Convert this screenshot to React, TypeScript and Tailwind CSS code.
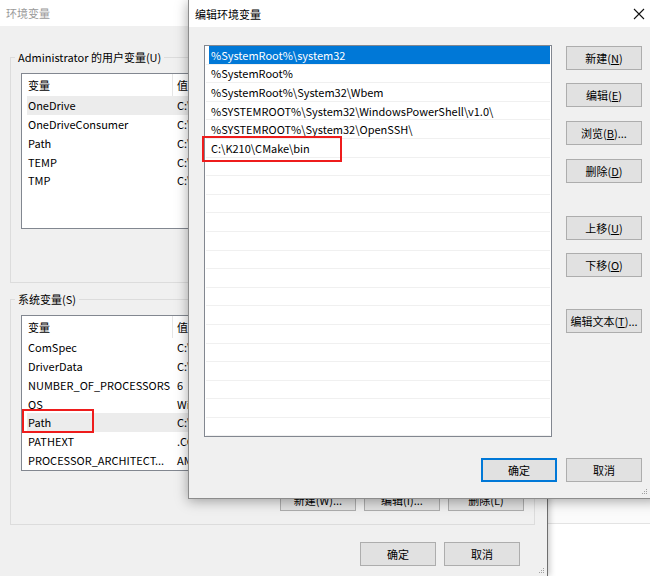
import React from "react";

const userVars: [string, string][] = [
  ["OneDrive", "C:\\Users\\Administrator\\OneDrive"],
  ["OneDriveConsumer", "C:\\Users\\Administrator\\OneDrive"],
  ["Path", "C:\\Users\\Administrator\\AppData\\Local\\Microsoft\\WindowsApps;"],
  ["TEMP", "C:\\Users\\Administrator\\AppData\\Local\\Temp"],
  ["TMP", "C:\\Users\\Administrator\\AppData\\Local\\Temp"],
];

const sysVars: [string, string][] = [
  ["ComSpec", "C:\\Windows\\system32\\cmd.exe"],
  ["DriverData", "C:\\Windows\\System32\\Drivers\\DriverData"],
  ["NUMBER_OF_PROCESSORS", "6"],
  ["OS", "Windows_NT"],
  ["Path", "C:\\Windows\\system32;C:\\Windows;"],
  ["PATHEXT", ".COM;.EXE;.BAT;.CMD;.VBS"],
  ["PROCESSOR_ARCHITECT...", "AMD64"],
];

const pathEntries = [
  "%SystemRoot%\\system32",
  "%SystemRoot%",
  "%SystemRoot%\\System32\\Wbem",
  "%SYSTEMROOT%\\System32\\WindowsPowerShell\\v1.0\\",
  "%SYSTEMROOT%\\System32\\OpenSSH\\",
  "C:\\K210\\CMake\\bin",
];

function WinButton({ children, primary = false, h = "h-[24px]" }: { children: React.ReactNode; primary?: boolean; h?: string }) {
  return (
    <button
      className={`${h} w-[76px] shrink-0 flex items-center justify-center bg-[#e1e1e1] text-[11px] text-black ${
        primary ? "border-2 border-[#0078d7]" : "border border-[#adadad]"
      }`}
    >
      {children}
    </button>
  );
}

function Grip() {
  return (
    <svg width="6" height="6" viewBox="0 0 6 6" className="block">
      <rect x="4" y="0" width="1" height="1" fill="#a0a0a0" />
      <rect x="2" y="2" width="1" height="1" fill="#a0a0a0" />
      <rect x="4" y="2" width="1" height="1" fill="#a0a0a0" />
      <rect x="0" y="4" width="1" height="1" fill="#a0a0a0" />
      <rect x="2" y="4" width="1" height="1" fill="#a0a0a0" />
      <rect x="4" y="4" width="1" height="1" fill="#a0a0a0" />
    </svg>
  );
}

function VarList({ rows, active, mark = false }: { rows: [string, string][]; active: number; mark?: boolean }) {
  return (
    <div className="relative ml-[10px] mr-[10px] mt-[8px] h-[156px] overflow-hidden border border-[#828790] bg-white">
      <div className="flex h-[22px] items-center">
        <div className="flex h-full w-[151px] items-center border-r border-[#e5e5e5] pl-[6px]">变量</div>
        <div className="pl-[4px]">值</div>
      </div>
      {rows.map(([name, value], i) => (
        <div key={name} className={`ml-[5px] flex h-[18.75px] items-center ${i === active ? "bg-[#ececec]" : ""}`}>
          <div className="w-[146px] shrink-0 overflow-hidden whitespace-nowrap pl-[1px] pr-[2px]">{name}</div>
          <div className="truncate whitespace-nowrap pl-[4px]">{value}</div>
        </div>
      ))}
      {mark && <div className="absolute left-0 top-[93px] h-[24px] w-[72px] border-2 border-[#ee1c1c]" />}
    </div>
  );
}

function GroupButtons() {
  return (
    <div className="mr-[10px] mt-[17px] flex justify-end gap-[8px]">
      <WinButton h="h-[23px]">新建(W)...</WinButton>
      <WinButton h="h-[23px]">编辑(I)...</WinButton>
      <WinButton h="h-[23px]">删除(L)</WinButton>
    </div>
  );
}

function MainWindow() {
  return (
    <div className="absolute left-0 top-0 flex h-[576px] w-[548px] flex-col border-r border-[#6e6e6e] bg-[#f0f0f0] shadow-[2px_0_6px_rgba(0,0,0,0.2)]">
      <div className="flex h-[26px] shrink-0 items-center bg-white pl-[6px] text-[#9a9a9a]">环境变量</div>
      <div className="flex flex-1 flex-col">
        <fieldset className="ml-[10px] mr-[12px] mt-[23px] border border-[#dcdcdc] pb-[13px]">
          <legend className="ml-[4px] px-[3px] leading-[16px]">Administrator 的用户变量(U)</legend>
          <VarList rows={userVars} active={0} />
          <GroupButtons />
        </fieldset>
        <fieldset className="ml-[10px] mr-[12px] mt-[8px] border border-[#dcdcdc] pb-[13px]">
          <legend className="ml-[4px] px-[3px] leading-[16px]">系统变量(S)</legend>
          <VarList rows={sysVars} active={4} mark />
          <GroupButtons />
        </fieldset>
        <div className="mr-[27px] mt-[17px] flex justify-end gap-[8px]">
          <WinButton>确定</WinButton>
          <WinButton>取消</WinButton>
        </div>
        <div className="mr-[2px] mt-auto mb-[2px] flex justify-end">
          <Grip />
        </div>
      </div>
    </div>
  );
}

function EditDialog() {
  const rowCount = 21;
  return (
    <div className="absolute left-[188px] top-0 flex h-[499px] w-[472px] flex-col border-b border-l border-[#8c8c8c] bg-[#f0f0f0] shadow-[0_2px_12px_rgba(0,0,0,0.35)]">
      <div className="flex h-[27px] shrink-0 items-center justify-between bg-white pl-[6px] pr-[12px] text-black">
        <span>编辑环境变量</span>
        <svg width="12" height="12" viewBox="0 0 12 12" className="mr-[3px]">
          <path d="M1 1 L11 11 M11 1 L1 11" stroke="#111" strokeWidth="1.1" fill="none" />
        </svg>
      </div>
      <div className="flex w-fit flex-col pl-[15px] pt-[18px]">
        <div className="flex">
          <div className="relative h-[392px] w-[348px] border border-[#828790] bg-white">
            <div className="h-full overflow-hidden">
              {Array.from({ length: rowCount }).map((_, i) => {
                const text = pathEntries[i] ?? "";
                const selected = i === 0;
                return (
                  <div key={i} className="mx-[1px] flex h-[18.6px] border-b border-[#f0f0f0]">
                    <div
                      className={`ml-[3px] flex flex-1 items-center whitespace-nowrap pl-[2px] ${
                        selected ? "bg-[#0078d7] text-white" : "text-black"
                      }`}
                    >
                      {text}
                    </div>
                  </div>
                );
              })}
            </div>
            <div className="absolute left-[-3px] top-[90px] h-[26px] w-[140px] border-2 border-[#ee1c1c]" />
          </div>
          <div className="ml-[14px] mt-[1px] flex flex-col">
            <WinButton>
              新建(<u>N</u>)
            </WinButton>
            <div className="mt-[13px]">
              <WinButton>
                编辑(<u>E</u>)
              </WinButton>
            </div>
            <div className="mt-[14px]">
              <WinButton>
                浏览(<u>B</u>)...
              </WinButton>
            </div>
            <div className="mt-[14px]">
              <WinButton>
                删除(<u>D</u>)
              </WinButton>
            </div>
            <div className="mt-[33px]">
              <WinButton>
                上移(<u>U</u>)
              </WinButton>
            </div>
            <div className="mt-[13px]">
              <WinButton>
                下移(<u>O</u>)
              </WinButton>
            </div>
            <div className="mt-[32px]">
              <WinButton>
                编辑文本(<u>T</u>)...
              </WinButton>
            </div>
          </div>
        </div>
        <div className="mt-[21px] flex justify-end gap-[9px]">
          <WinButton primary>确定</WinButton>
          <WinButton>取消</WinButton>
        </div>
      </div>
      <div className="mr-[12px] mt-auto mb-[3px] flex justify-end">
        <Grip />
      </div>
    </div>
  );
}

export default function App() {
  return (
    <div className="relative h-[576px] w-[650px] overflow-hidden bg-white font-['Noto_Sans_CJK_SC',sans-serif] text-[11px] leading-[16px] text-black">
      <div className="absolute left-[548px] right-0 top-[490px] h-[34px] border-b border-[#e3e3e3] bg-[#fbfbfb]" />
      <MainWindow />
      <EditDialog />
    </div>
  );
}
